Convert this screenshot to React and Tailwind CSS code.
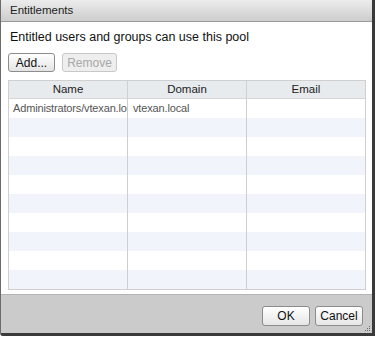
export default function App() {
  const rows = Array.from({ length: 10 });
  return (
    <div className="w-[378px] h-[339px] bg-white" style={{ fontFamily: '"Liberation Sans", Arial, sans-serif' }}>
      <div className="w-[375px] h-[336px] flex flex-col bg-white border-l border-[#6b6b6b] border-r-[3px] border-r-[#3a3a3a] border-b-[3px] border-b-[#3a3a3a] rounded-bl-[3px]">
        <div className="h-[22px] shrink-0 flex items-center pl-[9px] text-[11.5px] text-[#222] bg-gradient-to-b from-[#ececec] to-[#cdcdcd] border-b border-[#9a9a9a]">
          Entitlements
        </div>
        <div className="flex-1 flex flex-col px-[7px] bg-white">
          <div className="mt-[8px] pl-[2px] text-[12.5px] text-[#111] leading-[15px]">Entitled users and groups can use this pool</div>
          <div className="mt-[8px] flex gap-[7px]">
            <button className="w-[47px] h-[19px] text-[12px] text-[#111] rounded-[3px] border border-[#8c8c8c] bg-gradient-to-b from-white to-[#e4e4e4] flex items-center justify-center">Add...</button>
            <button className="w-[55px] h-[19px] text-[12px] text-[#a8a8a8] rounded-[3px] border border-[#c8c8c8] bg-[#eeeeee] flex items-center justify-center">Remove</button>
          </div>
          <div className="mt-[8px] w-[358px] border border-[#d0d0d0] flex flex-col">
            <div className="grid grid-cols-[119px_119px_1fr] h-[18px] bg-[#e8ebee] border-b border-[#d6d6d6] text-[11.5px] text-[#222]">
              <div className="flex items-center justify-center border-r border-[#d0d0d0]">Name</div>
              <div className="flex items-center justify-center border-r border-[#d0d0d0]">Domain</div>
              <div className="flex items-center justify-center">Email</div>
            </div>
            {rows.map((_, i) => (
              <div key={i} className={"grid grid-cols-[119px_119px_1fr] h-[19px] text-[11px] tracking-[-0.15px] text-[#555] " + (i % 2 === 1 ? "bg-[#f1f4fa]" : "bg-white")}>
                <div className="flex items-center pl-[4px] border-r border-[#cfcfcf] overflow-hidden whitespace-nowrap">{i === 0 ? "Administrators/vtexan.local" : ""}</div>
                <div className="flex items-center pl-[5px] border-r border-[#cfcfcf] overflow-hidden whitespace-nowrap">{i === 0 ? "vtexan.local" : ""}</div>
                <div></div>
              </div>
            ))}
          </div>
          <div className="flex-1"></div>
        </div>
        <div className="h-[39px] shrink-0 bg-[#cbcbcb] border-t border-[#b5b5b5] flex items-start justify-end gap-[5px] pr-[9px] pt-[11px] relative">
          <button className="w-[48px] h-[20px] text-[12px] text-[#111] rounded-[3px] border border-[#8c8c8c] bg-gradient-to-b from-white to-[#e6e6e6] flex items-center justify-center">OK</button>
          <button className="w-[48px] h-[20px] text-[12px] text-[#111] rounded-[3px] border border-[#8c8c8c] bg-gradient-to-b from-white to-[#e6e6e6] flex items-center justify-center">Cancel</button>
          <svg className="absolute right-[1px] bottom-[1px]" width="7" height="7" viewBox="0 0 7 7">
            <rect x="5" y="1" width="1" height="1" fill="#666" />
            <rect x="3" y="3" width="1" height="1" fill="#666" />
            <rect x="5" y="3" width="1" height="1" fill="#666" />
            <rect x="1" y="5" width="1" height="1" fill="#666" />
            <rect x="3" y="5" width="1" height="1" fill="#666" />
            <rect x="5" y="5" width="1" height="1" fill="#666" />
          </svg>
        </div>
      </div>
    </div>
  );
}
